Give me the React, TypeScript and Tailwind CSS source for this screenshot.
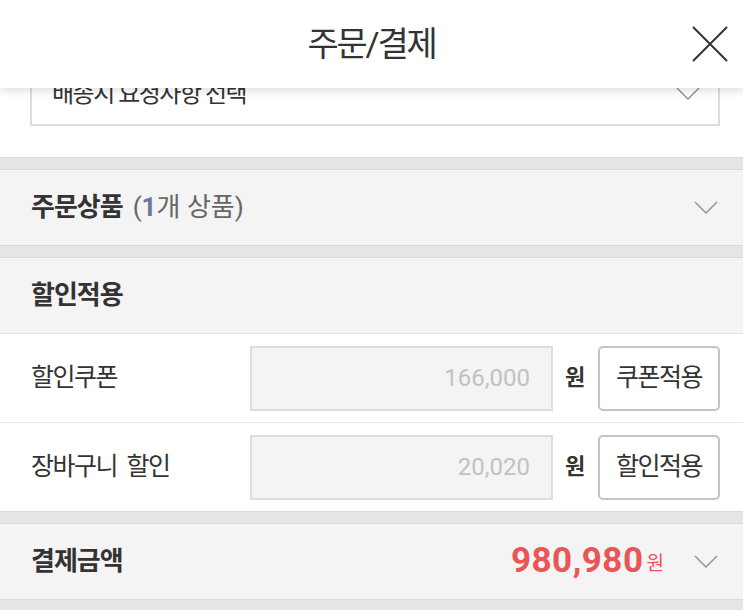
import React from "react";

const FONT = { fontFamily: 'Roboto, "Noto Sans CJK KR", sans-serif' };

const Chevron = () => (
  <svg width="24" height="13" viewBox="0 0 24 13" fill="none" stroke="#9a9a9a" strokeWidth="1.6">
    <path d="M1 1 L12 12 L23 1" />
  </svg>
);

const Gap = () => <div className="h-[13px] bg-[#e6e6e6] border-t border-b border-[#dadada]" />;

const Row = ({ label, value, btn }: { label: string; value: string; btn: string }) => (
  <div className="h-[88px] flex items-center pl-[31px] pr-[23px] bg-white">
    <div className="flex-1 text-[25px] tracking-[-1.5px] text-[#333] whitespace-pre">{label}</div>
    <div className="w-[303px] h-[65px] bg-[#f4f4f4] border-2 border-[#dddddd] flex items-center justify-end pr-[21px] text-[24px] text-[#c2c2c2]">
      {value}
    </div>
    <div className="w-[21px] mx-[12px] text-[22px] font-bold text-[#333] leading-none">원</div>
    <div className="w-[122px] h-[65px] border-2 border-[#c4c4c4] rounded-[5px] bg-white flex items-center justify-center text-[25px] tracking-[-1.5px] text-[#333]">
      {btn}
    </div>
  </div>
);

export default function App() {
  return (
    <div className="w-[743px] h-[610px] overflow-hidden bg-white" style={FONT}>
      <header className="relative z-10 h-[88px] bg-white shadow-[0_3px_8px_rgba(0,0,0,0.13)] grid grid-cols-[1fr_auto_1fr] items-center">
        <div />
        <h1 className="text-[34px] tracking-[-2.2px] text-[#333] font-normal">주문/결제</h1>
        <div className="flex justify-end pr-[15px]">
          <svg width="36" height="36" viewBox="0 0 36 36" stroke="#333" strokeWidth="2" fill="none">
            <path d="M1 1 L35 35 M35 1 L1 35" />
          </svg>
        </div>
      </header>
      <div className="pl-[30px] pr-[23px] pb-[31px]">
        <div className="-mt-[27px] h-[65px] border-2 border-[#dddddd] flex items-center justify-between pl-[20px] pr-[18px]">
          <span className="text-[24px] tracking-[-1.5px] text-[#333]">배송시 요청사항 선택</span>
          <Chevron />
        </div>
      </div>
      <Gap />
      <div className="h-[75px] bg-[#f4f4f4] flex items-center justify-between pl-[31px] pr-[25px]">
        <div className="flex items-baseline">
          <span className="text-[26px] font-bold tracking-[-1px] text-[#333]">주문상품</span>
          <span className="ml-[10px] text-[26px] tracking-[0px] text-[#666]">
            (<span className="font-bold text-[#6a7894]">1</span>개 상품)
          </span>
        </div>
        <Chevron />
      </div>
      <Gap />
      <div className="h-[76px] bg-[#f4f4f4] flex items-center pl-[31px] border-b border-[#e6e6e6]">
        <span className="text-[26px] font-bold tracking-[-1px] text-[#333]">할인적용</span>
      </div>
      <Row label="할인쿠폰" value="166,000" btn="쿠폰적용" />
      <div className="h-px bg-[#e8e8e8]" />
      <Row label="장바구니  할인" value="20,020" btn="할인적용" />
      <Gap />
      <div className="h-[75px] bg-[#f4f4f4] flex items-center justify-between pl-[31px] pr-[25px]">
        <span className="text-[26px] font-bold tracking-[-1px] text-[#333]">결제금액</span>
        <div className="flex items-center">
          <span className="text-[35px] font-bold text-[#e85656] tracking-[0.5px]">980,980</span>
          <span className="ml-[3px] mt-[6px] text-[19px] text-[#e85656]">원</span>
          <span className="ml-[30px] flex"><Chevron /></span>
        </div>
      </div>
      <Gap />
    </div>
  );
}
